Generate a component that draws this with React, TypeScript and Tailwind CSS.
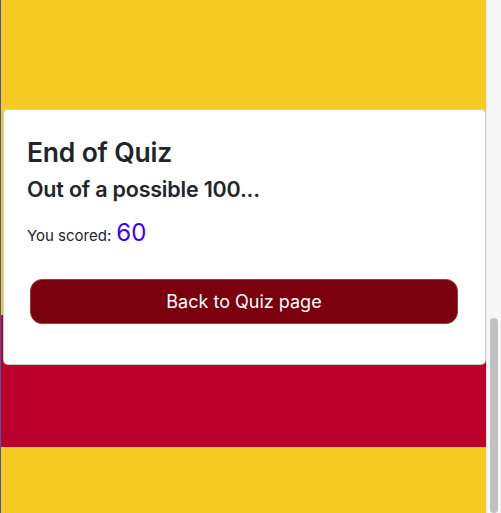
export default function App() {
  return (
    <div className="flex h-[513px] w-[501px] overflow-hidden" style={{ fontFamily: "Inter, 'Liberation Sans', sans-serif" }}>
      <div className="w-px bg-[#4f55a0]" />
      <div className="relative flex flex-1 flex-col">
        <div className="h-[315px] bg-[#f6cb26]" />
        <div className="h-[132px] bg-[#bb002c]" />
        <div className="flex-1 bg-[#f6cb26]" />

        {/* quiz result card */}
        <div className="absolute left-[2px] right-0 top-[109px] flex h-[256px] flex-col rounded-[5px] border border-black/20 bg-white pl-[23px] pr-6 pt-[26px] text-[#212529]">
          <h2 className="text-[26.5px] font-semibold leading-tight tracking-[-0.2px]">End of Quiz</h2>
          <h3 className="mt-[7px] text-[21.5px] font-semibold leading-tight tracking-[-0.2px]">Out of a possible 100...</h3>
          <p className="mt-[12px] flex items-baseline gap-[5px] text-[15px]">
            You scored:
            <span className="text-[24px] text-[#3a00ff]">60</span>
          </p>
          <button className="ml-[3px] mr-[3px] mt-[28px] h-[45px] rounded-[12px] border border-[#a33a44] bg-[#7a000d] text-[18px] text-white">
            Back to Quiz page
          </button>
        </div>
      </div>

      {/* scrollbar */}
      <div className="flex w-[15px] flex-col border-l border-[#ececec] bg-[#f7f7f7] px-[3px]">
        <div className="h-[318px]" />
        <div className="flex-1 rounded-full bg-[#c1c1c1]" />
      </div>
    </div>
  )
}
